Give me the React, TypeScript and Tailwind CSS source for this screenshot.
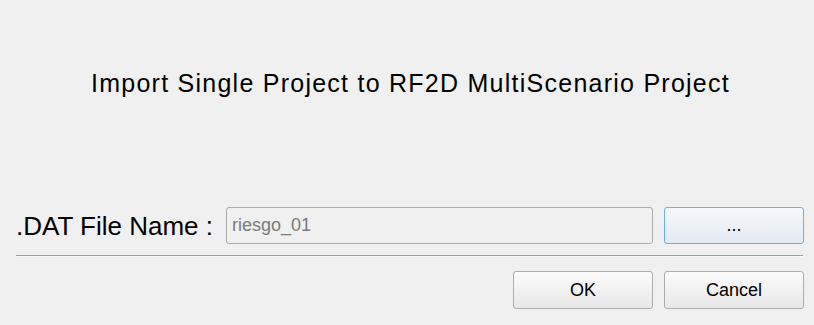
import React from "react";

export default function App() {
  const font = { fontFamily: '"Liberation Sans", Arial, sans-serif' };
  return (
    <div
      className="w-[814px] h-[325px] bg-[#f0f0f0] flex flex-col text-black overflow-hidden"
      style={font}
    >
      <div className="h-[166px] flex justify-center pt-[66px]">
        <div className="text-[25px] leading-[34px] tracking-[1.25px] pl-[7px]">
          Import Single Project to RF2D MultiScenario Project
        </div>
      </div>
      <div className="flex items-center pl-[16px] pr-[10px] mt-[41px] h-[37px]">
        <div className="text-[26px] leading-[30px] shrink-0 whitespace-nowrap">
          .DAT File Name :
        </div>
        <div className="flex-1 ml-[13px] h-[37px] border border-[#adadad] rounded-[3px] bg-[#f0f0f0] flex items-center pl-[5px] text-[18px] text-[#7a7a7a]">
          riesgo_01
        </div>
        <button className="ml-[11px] w-[140px] h-[37px] border border-[#5fb1fb] rounded-[3px] bg-gradient-to-b from-[#f6f9fc] to-[#e3eaf2] text-[18px] leading-none pb-[2px]">
          ...
        </button>
      </div>
      <div className="mt-[11px] ml-[16px] mr-[11px] h-[1px] bg-[#a0a0a0]" />
      <div className="ml-[16px] mr-[11px] h-[1px] bg-[#fafafa]" />
      <div className="flex justify-end gap-[11px] pr-[10px] mt-[14px]">
        <button className="w-[140px] h-[38px] border border-[#adadad] rounded-[3px] bg-gradient-to-b from-[#fcfcfc] to-[#e8e8e8] text-[18px]">
          OK
        </button>
        <button className="w-[140px] h-[38px] border border-[#adadad] rounded-[3px] bg-gradient-to-b from-[#fcfcfc] to-[#e8e8e8] text-[18px]">
          Cancel
        </button>
      </div>
    </div>
  );
}
